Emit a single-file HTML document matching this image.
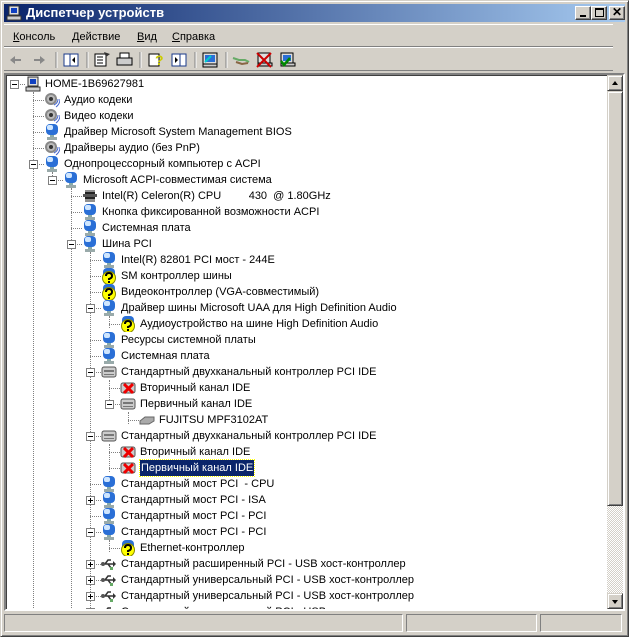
<!DOCTYPE html>
<html style="overflow:hidden;width:629px;height:637px"><head><meta charset="utf-8"><style>
*{margin:0;padding:0;box-sizing:border-box}
body{width:629px;height:637px;background:#d4d0c8;font-family:"Liberation Sans",Tahoma,sans-serif;font-size:11px;position:relative;overflow:hidden}
.win{position:absolute;left:0;top:0;width:629px;height:637px;border:1px solid;border-color:#d4d0c8 #404040 #404040 #d4d0c8;box-shadow:inset 1px 1px #fff,inset -1px -1px #808080}
.title{position:absolute;left:4px;top:4px;width:621px;height:18px;background:linear-gradient(90deg,#0a246a,#a6caf0);color:#fff;font-weight:bold;font-size:13px;line-height:18px;padding-left:22px}
.tb{position:absolute;top:2px;width:16px;height:14px;background:#d4d0c8;border:1px solid;border-color:#fff #404040 #404040 #fff;box-shadow:inset -1px -1px #808080}
.menu{position:absolute;top:29px;height:16px;line-height:16px}
.menu span{position:absolute;white-space:nowrap}
.hr{position:absolute;left:4px;width:609px;height:2px;border-top:1px solid #808080;border-bottom:1px solid #fff}
.tree{position:absolute;left:4px;top:73px;width:621px;height:538px;background:#fff;border:2px solid;border-color:#808080 #fff #fff #808080;box-shadow:inset 1px 1px #404040;overflow:hidden}
.in{position:absolute;left:-6px;top:-75px;width:629px;height:610px;overflow:hidden}
.r{position:absolute;height:16px;line-height:16px;white-space:pre;color:#000}
.ic{position:absolute;width:16px;height:16px}
.box{position:absolute;width:9px;height:9px;border:1px solid #808080;background:#fff}
.box:before{content:"";position:absolute;left:1px;top:3px;width:5px;height:1px;background:#000}
.box.p:after{content:"";position:absolute;left:3px;top:1px;width:1px;height:5px;background:#000}
.hl{position:absolute;height:1px;border-top:1px dotted #808080}
.vl{position:absolute;width:1px;border-left:1px dotted #808080}
.sb{position:absolute;left:607px;top:75px;width:16px;height:534px;background:repeating-conic-gradient(#d4d0c8 0 25%,#fff 0 50%) 0 0/2px 2px}
.btn{position:absolute;left:0;width:16px;background:#d4d0c8;border:1px solid;border-color:#d4d0c8 #404040 #404040 #d4d0c8;box-shadow:inset 1px 1px #fff,inset -1px -1px #808080}
.st{position:absolute;top:614px;height:18px;border:1px solid;border-color:#808080 #fff #fff #808080}
</style></head><body>
<svg width="0" height="0" style="position:absolute">
<defs>
<symbol id="dev" viewBox="0 0 16 16"><rect x="2" y="0" width="12" height="11" rx="4" fill="#2a6fd6"/><rect x="3" y="1" width="6" height="5" rx="2" fill="#cfe6ff"/><rect x="6" y="11" width="4" height="2" fill="#8aa"/><rect x="3" y="13" width="10" height="3" fill="#9aa"/></symbol>
<symbol id="spk" viewBox="0 0 16 16"><circle cx="7" cy="7" r="6" fill="#888"/><circle cx="7" cy="7" r="4" fill="#bbb"/><circle cx="7" cy="7" r="2" fill="#333"/><path d="M10 13q4-2 4-6M12 15q4-3 4-8" stroke="#46c" fill="none"/></symbol>
<symbol id="q" viewBox="0 0 16 16"><rect x="2" y="0" width="12" height="10" rx="4" fill="#2a6fd6"/><circle cx="8" cy="10" r="6.5" fill="#ff0" stroke="#880"/><path d="M5 8q0-3 3-3t3 3q0 2-3 3v1" stroke="#000" stroke-width="2" fill="none"/><rect x="7" y="13" width="2" height="2" fill="#000"/></symbol>
<symbol id="ide" viewBox="0 0 16 16"><rect x="1" y="3" width="14" height="10" rx="2" fill="#ccc" stroke="#555"/><rect x="3" y="6" width="10" height="2" fill="#777"/><rect x="3" y="10" width="10" height="1" fill="#777"/></symbol>
<symbol id="idex" viewBox="0 0 16 16"><rect x="1" y="3" width="14" height="10" rx="2" fill="#ccc" stroke="#555"/><path d="M4 4l9 9M13 4l-9 9" stroke="#e00" stroke-width="3"/></symbol>
<symbol id="cpu" viewBox="0 0 16 16"><rect x="3" y="4" width="10" height="7" fill="#222"/><path d="M4 2v12M6 2v12M8 2v12M10 2v12M12 2v12" stroke="#222"/><rect x="1" y="6" width="14" height="3" fill="#555"/></symbol>
<symbol id="disk" viewBox="0 0 16 16"><path d="M1 9l5-4h9v4l-5 3H1z" fill="#aaa" stroke="#666"/></symbol>
<symbol id="usb" viewBox="0 0 16 16"><path d="M1 8h12M4 8l3-4h3M7 8l3 4h2" stroke="#333" stroke-width="1.5" fill="none"/><path d="M12 5l3 3-3 3z" fill="#333"/><circle cx="2" cy="8" r="2" fill="#555"/><rect x="9" y="11" width="3" height="3" fill="#6a6"/></symbol>
<symbol id="comp" viewBox="0 0 16 16"><rect x="3" y="1" width="10" height="9" fill="#ddd" stroke="#333"/><rect x="5" y="3" width="6" height="5" fill="#1040c0"/><rect x="1" y="11" width="14" height="4" fill="#ccc" stroke="#333"/></symbol>
</defs></svg>
<div class="win"></div>
<div class="title"><svg style="position:absolute;left:2px;top:1px" width="16" height="16"><use href="#comp"/></svg>Диспетчер устройств
<div class="tb" style="left:571px"><div style="position:absolute;left:4px;top:8px;width:6px;height:2px;background:#000"></div></div>
<div class="tb" style="left:587px"><div style="position:absolute;left:3px;top:1px;width:9px;height:9px;border:1px solid #000;border-top-width:2px"></div></div>
<div class="tb" style="left:605px;line-height:11px;text-align:center;color:#000;font-size:12px;font-weight:bold">✕</div>
</div>
<div class="hr" style="top:24px;height:0;border-bottom:none;border-top:1px solid #fff"></div>
<div class="menu"><span style="left:13px"><u>К</u>онсоль</span><span style="left:72px"><u>Д</u>ействие</span><span style="left:137px"><u>В</u>ид</span><span style="left:172px"><u>С</u>правка</span></div>
<div class="hr" style="top:46px"></div>
<svg style="position:absolute;left:0;top:48px" width="300" height="24">
<path d="M10 12l5-4v3h6v2h-6v3z" fill="#888"/><path d="M45 12l-5-4v3h-6v2h6v3z" fill="#888"/>
<g stroke="#808080"><path d="M56 4v16M87 4v16M140 4v16M195 4v16M226 4v16"/></g><g stroke="#fff"><path d="M57 4v16M88 4v16M141 4v16M196 4v16M227 4v16"/></g>
<rect x="64" y="6" width="14" height="12" fill="#fff" stroke="#1a3a8a"/><path d="M70 6v12" stroke="#1a3a8a"/><path d="M75 9l-3 3 3 3z" fill="#000"/>
<rect x="95" y="6" width="11" height="12" fill="#fff" stroke="#000"/><path d="M97 9h6M97 12h6M97 15h6" stroke="#000"/><path d="M104 4l6 2-4 3z" fill="#333"/>
<rect x="117" y="10" width="15" height="7" fill="#ccc" stroke="#000"/><rect x="120" y="5" width="9" height="5" fill="#fff" stroke="#000"/>
<rect x="149" y="6" width="10" height="12" fill="#fff" stroke="#000"/><text x="155" y="17" font-size="14" font-weight="bold" fill="#cc0" font-family="Liberation Sans">?</text>
<rect x="172" y="6" width="14" height="12" fill="#fff" stroke="#1a3a8a"/><path d="M180 6v12" stroke="#1a3a8a"/><path d="M175 9l3 3-3 3z" fill="#000"/>
<rect x="203" y="5" width="14" height="11" fill="#ddd" stroke="#000"/><rect x="205" y="7" width="10" height="7" fill="#2a6fd6"/><path d="M205 14l6-6" stroke="#0cc" stroke-width="2"/><rect x="203" y="16" width="14" height="3" fill="#ccc" stroke="#000"/>
<path d="M233 10l6 2h6l4 2" stroke="#6a6" stroke-width="2" fill="none"/><path d="M236 14l6 2 6-1" stroke="#864" stroke-width="2" fill="none"/>
<rect x="258" y="5" width="12" height="10" fill="#ddd" stroke="#000"/><rect x="258" y="15" width="14" height="3" fill="#ccc" stroke="#000"/><path d="M257 5l14 14M271 5l-14 14" stroke="#c00" stroke-width="2"/>
<rect x="281" y="5" width="12" height="10" fill="#ddd" stroke="#000"/><rect x="283" y="7" width="8" height="6" fill="#2a6fd6"/><rect x="281" y="15" width="14" height="3" fill="#ccc" stroke="#000"/><path d="M281 13l3 4 6-7" stroke="#080" stroke-width="2.5" fill="none"/>
</svg>
<div class="hr" style="top:70px;border-bottom:none"></div>
<div class="tree"><div class="in">
<div class="vl" style="left:33px;top:92px;height:520px"></div>
<div class="vl" style="left:52px;top:172px;height:12px"></div>
<div class="vl" style="left:71px;top:188px;height:420px"></div>
<div class="vl" style="left:90px;top:252px;height:360px"></div>
<div class="vl" style="left:109px;top:316px;height:12px"></div>
<div class="vl" style="left:109px;top:380px;height:28px"></div>
<div class="vl" style="left:109px;top:444px;height:28px"></div>
<div class="vl" style="left:109px;top:540px;height:12px"></div>
<div class="vl" style="left:128px;top:412px;height:12px"></div>
<div id="rows"></div>
</div></div>
<div class="sb">
<div class="btn" style="top:0;height:16px"><div style="position:absolute;left:4px;top:5px;border:3px solid transparent;border-bottom:4px solid #000;border-top:0;width:0"></div></div>
<div class="btn" style="top:16px;height:415px"></div>
<div class="btn" style="top:518px;height:16px"><div style="position:absolute;left:4px;top:6px;border:3px solid transparent;border-top:4px solid #000;border-bottom:0;width:0"></div></div>
</div>
<div class="st" style="left:4px;width:399px"></div>
<div class="st" style="left:406px;width:131px"></div>
<div class="st" style="left:540px;width:82px"></div>
<script>
var R=[[0,"comp","HOME-1B69627981","m"],[1,"spk","Аудио кодеки"],[1,"spk","Видео кодеки"],[1,"dev","Драйвер Microsoft System Management BIOS"],[1,"spk","Драйверы аудио (без PnP)"],[1,"dev","Однопроцессорный компьютер с ACPI","m"],[2,"dev","Microsoft ACPI-совместимая система","m"],[3,"cpu","Intel(R) Celeron(R) CPU         430  @ 1.80GHz"],[3,"dev","Кнопка фиксированной возможности ACPI"],[3,"dev","Системная плата"],[3,"dev","Шина PCI","m"],[4,"dev","Intel(R) 82801 PCI мост - 244E"],[4,"q","SM контроллер шины"],[4,"q","Видеоконтроллер (VGA-совместимый)"],[4,"dev","Драйвер шины Microsoft UAA для High Definition Audio","m"],[5,"q","Аудиоустройство на шине High Definition Audio"],[4,"dev","Ресурсы системной платы"],[4,"dev","Системная плата"],[4,"ide","Стандартный двухканальный контроллер PCI IDE","m"],[5,"idex","Вторичный канал IDE"],[5,"ide","Первичный канал IDE","m"],[6,"disk","FUJITSU MPF3102AT"],[4,"ide","Стандартный двухканальный контроллер PCI IDE","m"],[5,"idex","Вторичный канал IDE"],[5,"idex","Первичный канал IDE","","s"],[4,"dev","Стандартный мост PCI  - CPU"],[4,"dev","Стандартный мост PCI - ISA","p"],[4,"dev","Стандартный мост PCI - PCI"],[4,"dev","Стандартный мост PCI - PCI","m"],[5,"q","Ethernet-контроллер"],[4,"usb","Стандартный расширенный PCI - USB хост-контроллер","p"],[4,"usb","Стандартный универсальный PCI - USB хост-контроллер","p"],[4,"usb","Стандартный универсальный PCI - USB хост-контроллер","p"],[4,"usb","Стандартный универсальный PCI - USB хост-контроллер","p"]];
var h="";R.forEach(function(r,i){var L=r[0],c=14+19*L,y=84+16*i;
h+='<div class="hl" style="left:'+c+'px;top:'+y+'px;width:11px"></div>';
if(r[3])h+='<div class="box'+(r[3]=="p"?" p":"")+'" style="left:'+(c-4)+'px;top:'+(y-4)+'px"></div>';
h+='<svg class="ic" style="left:'+(c+11)+'px;top:'+(y-8)+'px"><use href="#'+r[1]+'"/></svg>';
var s=r[4]?'background:#0a246a;color:#fff;outline:1px dotted #ff0;padding:0 1px;':'';
h+='<div class="r" style="left:'+(c+31)+'px;top:'+(y-8)+'px;'+s+'">'+r[2]+'</div>';});
document.getElementById("rows").innerHTML=h;
</script>
</body></html>
